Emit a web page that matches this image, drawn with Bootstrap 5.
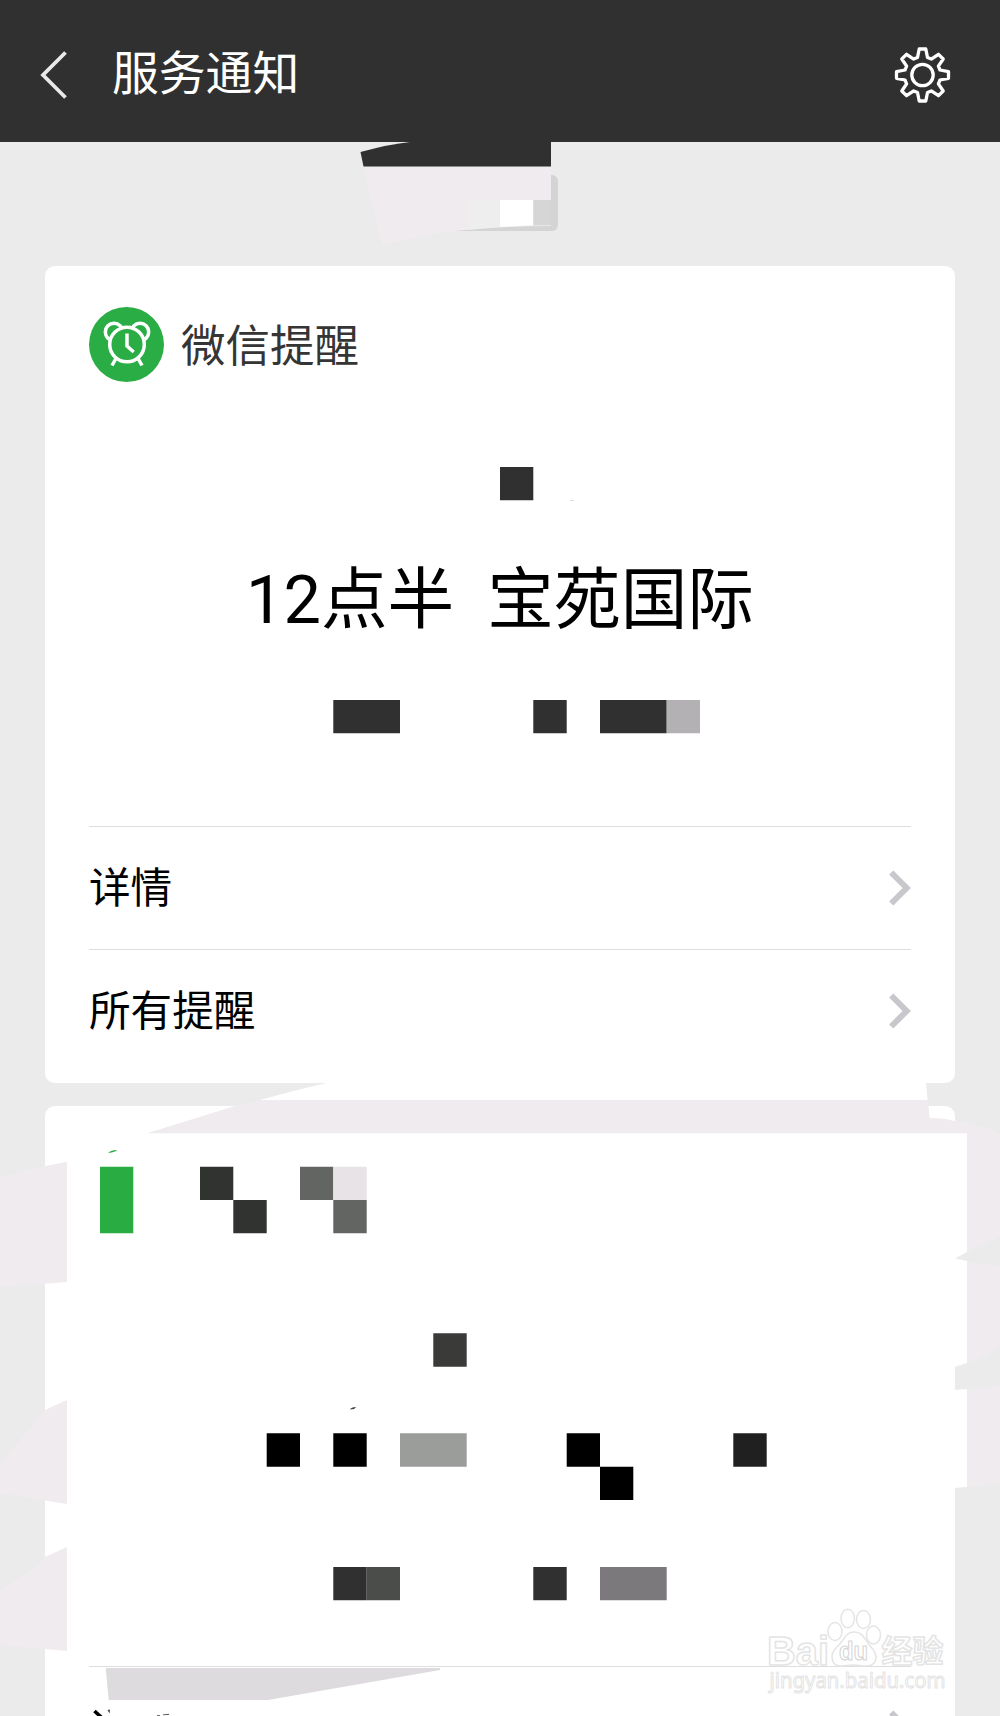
<!DOCTYPE html>
<html lang="zh-CN">
<head>
<meta charset="utf-8">
<meta name="viewport" content="width=device-width, initial-scale=1">
<title>服务通知</title>
<link href="https://cdn.jsdelivr.net/npm/bootstrap@5.3.0/dist/css/bootstrap.min.css" rel="stylesheet">
<style>
  body { background: #ebebeb; font-family: Roboto, "Noto Sans CJK SC", sans-serif; }
  .screen { width: 1000px; height: 1716px; }
  .topbar { height: 142px; background: #303030; padding: 0 49px 0 40px; }
  .topbar h1 { font-size: 46.8px; line-height: 60px; margin: 0 0 0 44px; padding-top: 5px; color: #fff; }
  .stamp-row { padding-top: 33px; height: 123.5px; }
  .stamp { width: 115px; height: 56px; border-radius: 6px; background: #d4d4d4; }
  .feed { padding: 0 45px; }
  .notice { border-radius: 10px; padding: 0 44px; --bs-card-border-width: 0; }
  .notice + .notice { margin-top: 23.500px; }
  .notice-main { height: 560px; padding-top: 41.500px; }
  .sender { font-size: 44.5px; line-height: 60px; color: #353535; margin-left: 17px; padding-top: 5px; }
  .message { font-size: 66.67px; line-height: 90px; color: #000; margin-top: 172.500px; white-space: pre; }
  .notice-row { border-top: 1.4px solid #dedede; height: 123.2px; font-size: 41.6px; line-height: 56px; color: #000; }
  .notice-row span { padding-top: 3px; }
  .marks { pointer-events: none; }
</style>
<script src="https://cdn.jsdelivr.net/npm/bootstrap@5.3.0/dist/js/bootstrap.bundle.min.js"></script>
</head>
<body>
<div class="screen position-relative overflow-hidden">
  <header class="topbar d-flex align-items-center">
    <svg width="28" height="50" viewBox="40 50 28 50" class="mt-2" fill="none" stroke="#e9e9e9" stroke-width="3.8"><path d="M65.5 52.5 43 75l22.500 22.500"/></svg>
    <h1 class="fw-normal">服务通知</h1>
    <svg class="ms-auto mt-2" width="58" height="58" viewBox="-29.500 -29 58 58" fill="none" stroke="#fff" stroke-width="3.3" stroke-linejoin="round">
      <path d="M-5-17.500-3.300-26H3.300L5-17.500 8.800-15.900 16-20.700 20.700-16 15.900-8.800 17.500-5 26-3.300V3.300L17.500 5 15.900 8.800 20.700 16 16 20.700 8.800 15.900 5 17.500 3.300 26H-3.300L-5 17.500-8.800 15.900-16 20.700-20.700 16-15.900 8.800-17.500 5-26 3.300V-3.300L-17.500-5-15.900-8.800-20.700-16-16-20.700-8.800-15.900Z"/>
      <circle r="10.700"/>
    </svg>
  </header>

  <div class="stamp-row d-flex justify-content-center"><div class="stamp"></div></div>

  <main class="feed">
    <article class="card notice" style="height:817px">
      <div class="notice-main">
        <div class="d-flex align-items-center">
          <svg width="75" height="75" viewBox="88.500 307.500 75 75" fill="none" stroke="#fff" stroke-width="3.500">
            <circle cx="126" cy="345" r="37.500" fill="#2aad44" stroke="none"/>
            <circle cx="113.500" cy="332.500" r="8.700"/><circle cx="139.500" cy="332.500" r="8.700"/>
            <path d="m116 358-4.500 8M137 358l4.500 8"/>
            <circle cx="126.500" cy="345" r="17.300" fill="#2aad44"/>
            <path d="M126.500 334v12.500l6.700 6"/>
          </svg>
          <div class="sender">微信提醒</div>
        </div>
        <div class="message text-center">12点半&nbsp;&nbsp;宝苑国际</div>
      </div>
      <div class="notice-row d-flex align-items-center justify-content-between">
        <span>详情</span>
        <svg width="22" height="36" viewBox="0 0 22 36" fill="none" stroke="#c8c7cc" stroke-width="6"><path d="m2.200 2.500 15.500 15.500-15.500 15.500"/></svg>
      </div>
      <div class="notice-row d-flex align-items-center justify-content-between">
        <span>所有提醒</span>
        <svg width="22" height="36" viewBox="0 0 22 36" fill="none" stroke="#c8c7cc" stroke-width="6"><path d="m2.200 2.500 15.500 15.500-15.500 15.500"/></svg>
      </div>
    </article>

    <article class="card notice" style="height:817px">
      <div class="notice-main"></div>
      <div class="notice-row d-flex align-items-center justify-content-end">
        <svg width="22" height="36" viewBox="0 0 22 36" fill="none" stroke="#c8c7cc" stroke-width="6"><path d="m2.200 2.500 15.500 15.500-15.500 15.500"/></svg>
      </div>
    </article>
  </main>

  <!-- Redaction strokes and mosaic cells lying over the feed -->
  <svg class="marks position-absolute top-0 start-0" width="1000" height="1716" viewBox="0 0 1000 1716">
    <g fill="#efebee">
      <path d="M363.500 166.500H551V226Q500 226 455 231 420 235 382 246Z"/>
      <path d="M260 1100H928L929.500 1118Q943 1118 955 1121 987 1125 1000 1134V1237L967 1252V1133.300H147L235 1106Z"/>
      <path d="M967 1261 1000 1267V1346Q990 1357 967 1363ZM967 1389 1000 1386V1482Q985 1486 967 1487Z"/>
      <path d="M0 1177 45 1166 67 1162V1282L0 1287ZM0 1464 33 1424 45 1410 67 1400V1504L0 1493ZM0 1590 35 1568 45 1557 67 1547V1651L0 1645Z"/>
    </g>
    <path fill="#303030" d="M360.500 152Q390 144 410 142H551V166.500H363.500Z"/>
    <path fill="#eee" d="M467 200H500V227L467 230Z"/>
    <path fill="#fff" d="M500 200H533.300V225.300L500 227Z"/>
    <path fill="#d6d6d6" d="M533.300 200H551V225.300H533.300Z"/>
    <path fill="#fff" d="M331 1082Q295 1090 260 1100H927.500L926 1082ZM954 1133.300H967V1252L955 1258.500 967 1261V1363L954 1367ZM954 1390 967 1389V1487L954 1488Z"/>
    <path fill="#dddbde" d="M105.700 1668H440V1670L268 1700H108.700Z"/>
    <g fill="#303030">
      <path d="M500 467h33.300v33.300H500zM333.300 700H400v33.300h-66.700zM533.300 700h33.400v33.300h-33.400zM600 700h66.700v33.300H600zM333.300 1567h33.400v33.300h-33.400zM533.300 1567h33.400v33.300h-33.400z"/>
      <path fill="#313331" d="M200 1166.700h33.300V1200H200zM233.300 1200h33.400v33.300h-33.400z"/>
      <path fill="#3a3b38" d="M433.300 1333.300h33.400v33.400h-33.400z"/>
      <path fill="#4b4d4a" d="M366.700 1567H400v33.300h-33.300z"/>
      <path fill="#636562" d="M300 1166.700h33.300V1200H300zM333.300 1200h33.400v33.300h-33.400z"/>
      <path fill="#202020" d="M733.300 1433.300h33.400v33.400h-33.400z"/>
      <path fill="#000" d="M266.700 1433.300H300v33.400h-33.300zM333.300 1433.300h33.400v33.400h-33.400zM566.700 1433.300H600v33.400h-33.300zM600 1466.700h33.300v33.300H600z"/>
      <path fill="#9b9d9a" d="M400 1433.300h66.700v33.400H400z"/>
      <path fill="#7b797b" d="M600 1567h66.700v33.300H600z"/>
      <path fill="#b4b1b5" d="M666.700 700H700v33.300h-33.300z"/>
      <path fill="#e7e3e7" d="M333.300 1166.700h33.400V1200h-33.400z"/>
      <path fill="#29ad42" d="M100 1166.700h33.300v66.600H100zM108 1153q3-3 9-3-1 2-9 3z"/>
      <path fill="#444" d="M350 1409.500q1-2.500 6-2.500-1 2.500-6 2.500zM163 1714.500l6-.700v.9l-6 .5zM157 1715.300h3v.7h-3zM107.500 1710l2.500-.500-.500 4z"/>
      <path fill="#ddd" d="M570 500h4v1h-4z"/>
    </g>
    <path d="m94.500 1711 7 6.500" stroke="#000" stroke-width="3.600"/>
    <!-- Watermark -->
    <g fill="#fff" stroke="#e4e4e4" stroke-width="1.500" stroke-linejoin="round">
      <text x="767" y="1664.500" font-family="Liberation Sans, sans-serif" font-weight="700" font-size="41" textLength="62" lengthAdjust="spacingAndGlyphs">Bai</text>
      <ellipse cx="835" cy="1631.500" rx="7" ry="9"/><ellipse cx="847.700" cy="1618.500" rx="6.700" ry="9.300"/><ellipse cx="863.500" cy="1619.500" rx="7" ry="9"/><ellipse cx="873.500" cy="1635" rx="7" ry="9"/>
      <path d="M854 1632c10 0 11 9 17 15 9 10 5 19-5 19-6 0-7-1-12-1s-8 1-13 1c-10 0-12-12-4-19s8-15 17-15z"/>
      <text x="839" y="1660" font-family="Liberation Sans, sans-serif" font-weight="700" font-size="25" textLength="29" lengthAdjust="spacingAndGlyphs" stroke="#d6d6d6" stroke-width="1.100">du</text>
      <text x="881.500" y="1662" font-family="Noto Sans CJK SC, sans-serif" font-weight="700" font-size="31" textLength="62">经验</text>
      <text x="769.500" y="1688" font-family="Noto Sans, sans-serif" font-size="22.500" textLength="176" lengthAdjust="spacingAndGlyphs" stroke-width="1.100">jingyan.baidu.com</text>
    </g>
  </svg>
</div>
</body>
</html>
